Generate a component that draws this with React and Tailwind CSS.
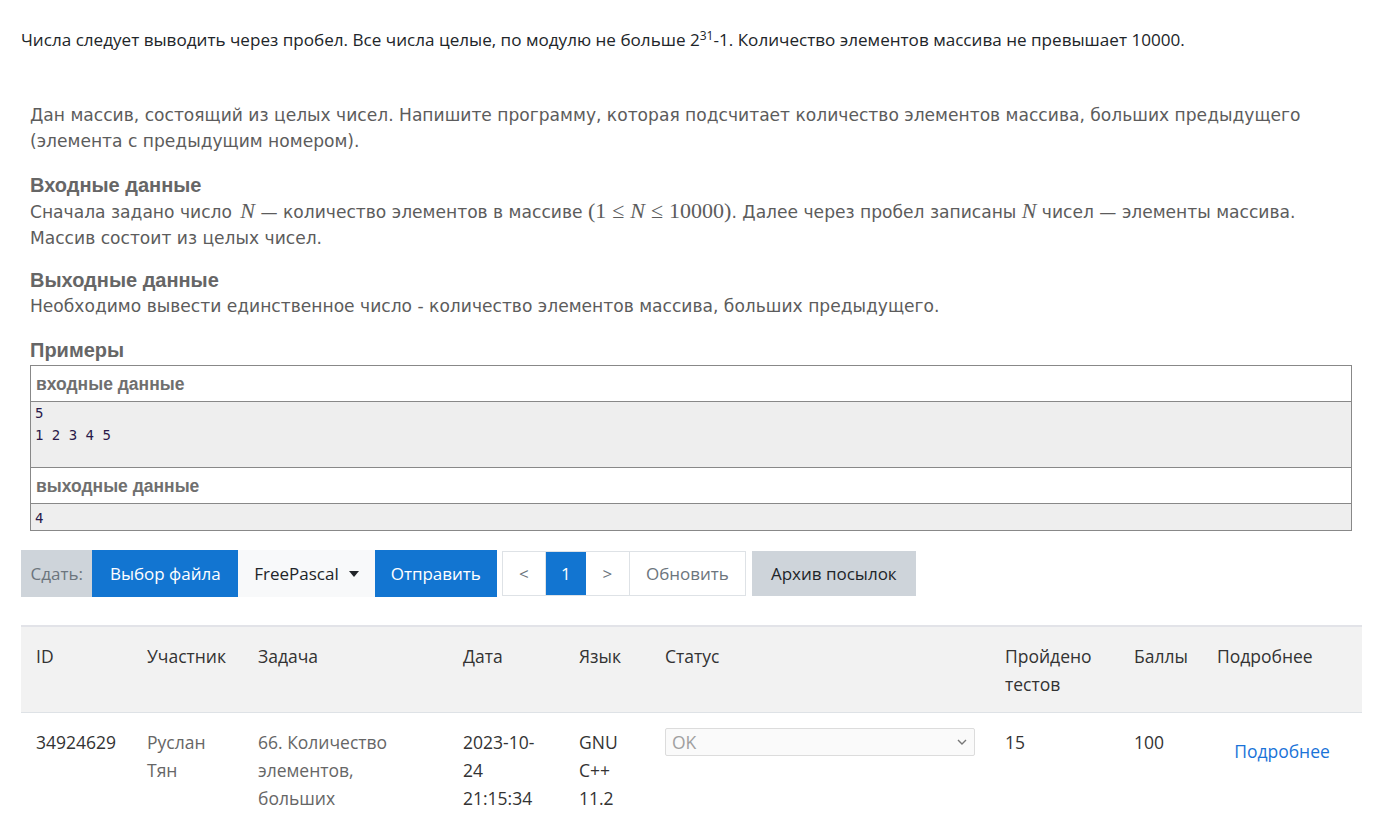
export default function App() {
  const math = "font-['Liberation_Serif','DejaVu_Serif',serif] text-[22px] leading-[0]";
  const cols = [
    { name: 'ID', w: 'w-[111px]' },
    { name: 'Участник', w: 'w-[111px]' },
    { name: 'Задача', w: 'w-[205px]' },
    { name: 'Дата', w: 'w-[116px]' },
    { name: 'Язык', w: 'w-[86px]' },
    { name: 'Статус', w: 'w-[340px]' },
    { name: 'Пройдено тестов', w: 'w-[129px]' },
    { name: 'Баллы', w: 'w-[83px]' },
    { name: 'Подробнее', w: 'w-[160px]' },
  ];
  const heading = "font-['Liberation_Sans',Arial,sans-serif] font-bold text-[20px] leading-[26px] text-[#666]";

  return (
    <div className="min-h-screen bg-white px-[21px] pt-[28px] text-[#212529] font-['Open_Sans',sans-serif]">
      <p className="text-[17.1px] leading-[24px]">
        Числа следует выводить через пробел. Все числа целые, по модулю не больше 2<sup className="text-[12px]">31</sup>-1. Количество элементов массива не превышает 10000.
      </p>

      <div className="mt-[50px] pl-[9px] pr-[2px] text-[#5c5c5c] font-['DejaVu_Sans','Verdana',sans-serif] text-[17.1px] leading-[26px]">
        <p>
          Дан массив, состоящий из целых чисел. Напишите программу, которая подсчитает количество элементов массива, больших предыдущего (элемента с предыдущим номером).
        </p>

        <h3 className={`mt-[18px] ${heading}`}>Входные данные</h3>
        <p className="mt-[1px]">
          Сначала задано число <span className={`${math} italic ml-[3px]`}>N</span> — количество элементов в массиве <span className={math}>(1<span className="mx-[6px]">≤</span><i>N</i><span className="mx-[6px]">≤</span>10000)</span>. Далее через пробел записаны <span className={`${math} italic`}>N</span> чисел — элементы массива. Массив состоит из целых чисел.
        </p>

        <h3 className={`mt-[16px] ${heading}`}>Выходные данные</h3>
        <p>Необходимо вывести единственное число - количество элементов массива, больших предыдущего.</p>

        <h3 className={`mt-[18px] ${heading}`}>Примеры</h3>
        <div className="border border-[#888] mt-[2px]">
          <div className="h-[36px] flex items-center px-[5px] bg-white font-['Liberation_Sans',Arial,sans-serif] font-bold text-[17.5px] text-[#6f6f6f] border-b border-[#888]">входные данные</div>
          <pre className="h-[66px] bg-[#eeeeee] px-[4px] pt-[0px] font-['DejaVu_Sans_Mono','Liberation_Mono',monospace] text-[14px] leading-[22px] text-[#2a1a4a] border-b border-[#888]">{'5\n1 2 3 4 5'}</pre>
          <div className="h-[36px] flex items-center px-[5px] bg-white font-['Liberation_Sans',Arial,sans-serif] font-bold text-[17.5px] text-[#6f6f6f] border-b border-[#888]">выходные данные</div>
          <pre className="h-[26px] bg-[#eeeeee] px-[4px] pt-[3px] font-['DejaVu_Sans_Mono','Liberation_Mono',monospace] text-[14px] leading-[22px] text-[#2a1a4a] overflow-hidden">4</pre>
        </div>
      </div>

      <div className="mt-[19px] flex items-center text-[17px]">
        <span className="h-[47px] flex items-center px-[9.5px] bg-[#ced4da] text-[#6c757d]">Сдать:</span>
        <span className="h-[47px] flex items-center px-[17.5px] bg-[#1275d1] text-white">Выбор файла</span>
        <span className="h-[47px] flex items-center gap-[10px] px-[16px] bg-[#f8f9fa] text-[#212529]">
          FreePascal
          <span className="w-0 h-0 border-l-[5px] border-r-[5px] border-t-[6px] border-l-transparent border-r-transparent border-t-[#212529]" />
        </span>
        <span className="h-[47px] flex items-center px-[16px] bg-[#1275d1] text-white">Отправить</span>
        <div className="ml-[5px] flex h-[45px] border border-[#dee2e6] text-[#6c757d]">
          <span className="w-[43px] flex items-center justify-center border-r border-[#dee2e6]">&lt;</span>
          <span className="w-[40px] flex items-center justify-center bg-[#1275d1] text-white">1</span>
          <span className="w-[44px] flex items-center justify-center border-r border-[#dee2e6]">&gt;</span>
          <span className="w-[115px] flex items-center justify-center">Обновить</span>
        </div>
        <span className="ml-[6px] h-[45px] flex items-center px-[19px] bg-[#ced4da] text-[#212529]">Архив посылок</span>
      </div>

      <table className="mt-[28px] w-[1341px] table-fixed border-collapse text-[17.5px] leading-[28px]">
        <thead>
          <tr className="bg-[#f2f2f2] border-t-2 border-[#e2e3e8] border-b border-b-[#dee2e6]">
            {cols.map((c) => (
              <th key={c.name} className={`${c.w} h-[86px] align-top text-left font-normal px-[15px] pt-[15px] text-[#333]`}>
                {c.name === 'Пройдено тестов' ? (<>Пройдено<br />тестов</>) : c.name}
              </th>
            ))}
          </tr>
        </thead>
        <tbody>
          <tr className="align-top">
            <td className="px-[15px] pt-[15px] text-[#333]">34924629</td>
            <td className="px-[15px] pt-[15px] text-[#666]">Руслан Тян</td>
            <td className="px-[15px] pt-[15px] text-[#666]">66. Количество элементов, больших</td>
            <td className="px-[15px] pt-[15px] text-[#333]">2023-10-24 21:15:34</td>
            <td className="px-[15px] pt-[15px] text-[#333]">GNU C++ 11.2</td>
            <td className="px-[15px] pt-[15px]">
              <div className="h-[28px] flex items-center justify-between px-[6px] border border-[#dcdcdc] rounded-[2px] bg-[#fafafa] text-[#a0a0a0]">
                <span>OK</span>
                <svg width="12" height="8" viewBox="0 0 12 8" fill="none" stroke="#777" strokeWidth="1.4"><path d="M2 2l4 4 4-4" /></svg>
              </div>
            </td>
            <td className="px-[15px] pt-[15px] text-[#333]">15</td>
            <td className="px-[15px] pt-[15px] text-[#333]">100</td>
            <td className="px-[15px] pt-[24px] text-center">
              <a className="text-[#1a73d8]">Подробнее</a>
            </td>
          </tr>
        </tbody>
      </table>
    </div>
  );
}
